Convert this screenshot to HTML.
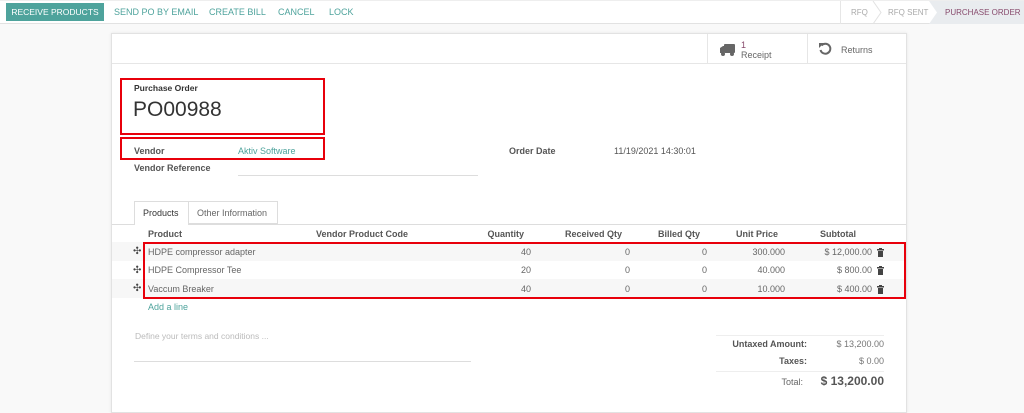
<!DOCTYPE html>
<html><head><meta charset="utf-8"><style>
*{margin:0;padding:0;box-sizing:border-box}
body{width:1024px;height:408px;overflow:hidden;background:#f9f9f9;font-family:"Liberation Sans",sans-serif;font-size:9px;color:#4c4c4c;position:relative}
.a{position:absolute;white-space:nowrap}
.b{font-weight:bold}
.r{text-align:right}
</style></head><body>
<div class="a" style="left:0;top:0;width:1024px;height:24px;background:#fff;border-bottom:1px solid #e2e2e2;border-top:1px solid #eee"></div>
<div class="a" style="left:6px;top:3px;width:98px;height:18px;background:#4ea39c;color:#fff;font-size:8.5px;line-height:18px;text-align:center">RECEIVE PRODUCTS</div>
<div class="a" style="left:114px;top:7px;color:#4ea39c;font-size:9px">SEND PO BY EMAIL</div>
<div class="a" style="left:209px;top:7px;color:#4ea39c;font-size:9px">CREATE BILL</div>
<div class="a" style="left:278px;top:7px;color:#4ea39c;font-size:9px">CANCEL</div>
<div class="a" style="left:329px;top:7px;color:#4ea39c;font-size:9px">LOCK</div>
<div class="a" style="left:840px;top:1px;width:1px;height:23px;background:#e6e6e6"></div>
<div class="a" style="left:851px;top:8px;color:#aaa;font-size:8px">RFQ</div>
<svg class="a" style="left:872px;top:1px" width="10" height="23"><path d="M1 0 L9 11.5 L1 23" fill="none" stroke="#e2e2e2"/></svg>
<div class="a" style="left:888px;top:8px;color:#aaa;font-size:8px">RFQ SENT</div>
<svg class="a" style="left:929px;top:1px" width="95" height="23"><path d="M0 0 L95 0 L95 23 L0 23 L8 11.5 Z" fill="#e9ecef"/></svg>
<div class="a" style="left:945px;top:8px;color:#874a6c;font-size:8px">PURCHASE ORDER</div>

<div class="a" style="left:111px;top:33px;width:796px;height:380px;background:#fff;border:1px solid #e2e2e2;box-shadow:0 0 3px rgba(0,0,0,.08)"></div>
<div class="a" style="left:112px;top:63px;width:794px;height:1px;background:#e6e6e6"></div>
<div class="a" style="left:707px;top:34px;width:1px;height:29px;background:#e6e6e6"></div>
<div class="a" style="left:807px;top:34px;width:1px;height:29px;background:#e6e6e6"></div>
<svg class="a" style="left:719px;top:43px" width="17" height="13"><rect x="5" y="1" width="11" height="9" rx="1" fill="#666"/><path d="M1 5 L4 3 L5 3 L5 10 L1 10Z" fill="#666"/><circle cx="4" cy="11" r="2" fill="#666"/><circle cx="13" cy="11" r="2" fill="#666"/></svg>
<div class="a" style="left:741px;top:40px;color:#874a6c;font-size:9px;line-height:10px">1<br><span style="color:#666">Receipt</span></div>
<svg class="a" style="left:818px;top:42px" width="14" height="14"><path d="M3.5 3.5 A5 5 0 1 1 2.5 8" fill="none" stroke="#666" stroke-width="2"/><path d="M1 1 L6 1 L1 6 Z" fill="#666"/></svg>
<div class="a" style="left:841px;top:45px;color:#666;font-size:9px">Returns</div>

<div class="a" style="left:120px;top:78px;width:205px;height:57px;border:2px solid #e8000b"></div>
<div class="a b" style="left:134px;top:83px;font-size:8.5px;color:#333">Purchase Order</div>
<div class="a" style="left:133px;top:98px;font-size:21px;color:#333">PO00988</div>
<div class="a" style="left:120px;top:137px;width:205px;height:23px;border:2px solid #e8000b"></div>
<div class="a b" style="left:134px;top:146px;color:#555">Vendor</div>
<div class="a" style="left:238px;top:146px;color:#4ea39c">Aktiv Software</div>
<div class="a b" style="left:134px;top:163px;color:#555">Vendor Reference</div>
<div class="a" style="left:238px;top:175px;width:240px;height:1px;background:#ddd"></div>
<div class="a b" style="left:509px;top:146px;color:#555">Order Date</div>
<div class="a" style="left:614px;top:146px;color:#555">11/19/2021 14:30:01</div>

<div class="a" style="left:134px;top:201px;width:55px;height:24px;background:#fff;border:1px solid #ddd;border-bottom:none"></div>
<div class="a" style="left:143px;top:208px;color:#333">Products</div>
<div class="a" style="left:189px;top:201px;width:89px;height:23px;border:1px solid #ddd;border-left:none"></div>
<div class="a" style="left:197px;top:208px;color:#666">Other Information</div>
<div class="a" style="left:112px;top:224px;width:22px;height:1px;background:#ddd"></div>
<div class="a" style="left:189px;top:224px;width:717px;height:1px;background:#ddd"></div>

<div class="a b" style="left:148px;top:229px;color:#555">Product</div>
<div class="a b" style="left:316px;top:229px;color:#555">Vendor Product Code</div>
<div class="a b r" style="left:470px;top:229px;width:54px;color:#555">Quantity</div>
<div class="a b r" style="left:560px;top:229px;width:62px;color:#555">Received Qty</div>
<div class="a b r" style="left:650px;top:229px;width:50px;color:#555">Billed Qty</div>
<div class="a b r" style="left:720px;top:229px;width:58px;color:#555">Unit Price</div>
<div class="a b" style="left:820px;top:229px;color:#555">Subtotal</div>
<div class="a" style="left:112px;top:242px;width:794px;height:19px;background:#f7f7f7"></div>
<div class="a" style="left:112px;top:279px;width:794px;height:19px;background:#f7f7f7"></div>
<div class="a" style="left:143px;top:242px;width:763px;height:57px;border:2px solid #e8000b"></div>

<div class="a" style="left:133px;top:246px;font-size:10px;color:#444">✣</div>
<div class="a" style="left:133px;top:265px;font-size:10px;color:#444">✣</div>
<div class="a" style="left:133px;top:283px;font-size:10px;color:#444">✣</div>
<div class="a" style="left:148px;top:247px;color:#666">HDPE compressor adapter</div>
<div class="a" style="left:148px;top:265px;color:#666">HDPE Compressor Tee</div>
<div class="a" style="left:148px;top:284px;color:#666">Vaccum Breaker</div>
<div class="a r" style="left:470px;top:247px;width:61px;color:#666">40</div>
<div class="a r" style="left:470px;top:265px;width:61px;color:#666">20</div>
<div class="a r" style="left:470px;top:284px;width:61px;color:#666">40</div>
<div class="a r" style="left:560px;top:247px;width:70px;color:#666">0</div>
<div class="a r" style="left:560px;top:265px;width:70px;color:#666">0</div>
<div class="a r" style="left:560px;top:284px;width:70px;color:#666">0</div>
<div class="a r" style="left:650px;top:247px;width:57px;color:#666">0</div>
<div class="a r" style="left:650px;top:265px;width:57px;color:#666">0</div>
<div class="a r" style="left:650px;top:284px;width:57px;color:#666">0</div>
<div class="a r" style="left:720px;top:247px;width:65px;color:#666">300.000</div>
<div class="a r" style="left:720px;top:265px;width:65px;color:#666">40.000</div>
<div class="a r" style="left:720px;top:284px;width:65px;color:#666">10.000</div>
<div class="a r" style="left:800px;top:247px;width:72px;color:#666">$ 12,000.00</div>
<div class="a r" style="left:800px;top:265px;width:72px;color:#666">$ 800.00</div>
<div class="a r" style="left:800px;top:284px;width:72px;color:#666">$ 400.00</div>
<svg class="a" style="left:877px;top:248px" width="7" height="9"><rect x="0" y="1" width="7" height="1.5" fill="#444"/><rect x="2" y="0" width="3" height="1" fill="#444"/><rect x="1" y="3" width="5" height="6" fill="#444"/></svg>
<svg class="a" style="left:877px;top:266px" width="7" height="9"><rect x="0" y="1" width="7" height="1.5" fill="#444"/><rect x="2" y="0" width="3" height="1" fill="#444"/><rect x="1" y="3" width="5" height="6" fill="#444"/></svg>
<svg class="a" style="left:877px;top:285px" width="7" height="9"><rect x="0" y="1" width="7" height="1.5" fill="#444"/><rect x="2" y="0" width="3" height="1" fill="#444"/><rect x="1" y="3" width="5" height="6" fill="#444"/></svg>
<div class="a" style="left:148px;top:302px;color:#4ea39c">Add a line</div>

<div class="a" style="left:135px;top:331px;color:#bbb;font-size:8.5px">Define your terms and conditions ...</div>
<div class="a" style="left:134px;top:361px;width:337px;height:1px;background:#ddd"></div>
<div class="a" style="left:716px;top:335px;width:168px;height:1px;background:#eee"></div>
<div class="a b r" style="left:700px;top:339px;width:107px;color:#555">Untaxed Amount:</div>
<div class="a r" style="left:800px;top:339px;width:84px;color:#777">$ 13,200.00</div>
<div class="a b r" style="left:700px;top:356px;width:107px;color:#555">Taxes:</div>
<div class="a r" style="left:800px;top:356px;width:84px;color:#777">$ 0.00</div>
<div class="a" style="left:716px;top:371px;width:168px;height:1px;background:#eee"></div>
<div class="a r" style="left:700px;top:377px;width:103px;color:#666">Total:</div>
<div class="a b r" style="left:780px;top:374px;width:104px;color:#555;font-size:12px">$ 13,200.00</div>
</body></html>
